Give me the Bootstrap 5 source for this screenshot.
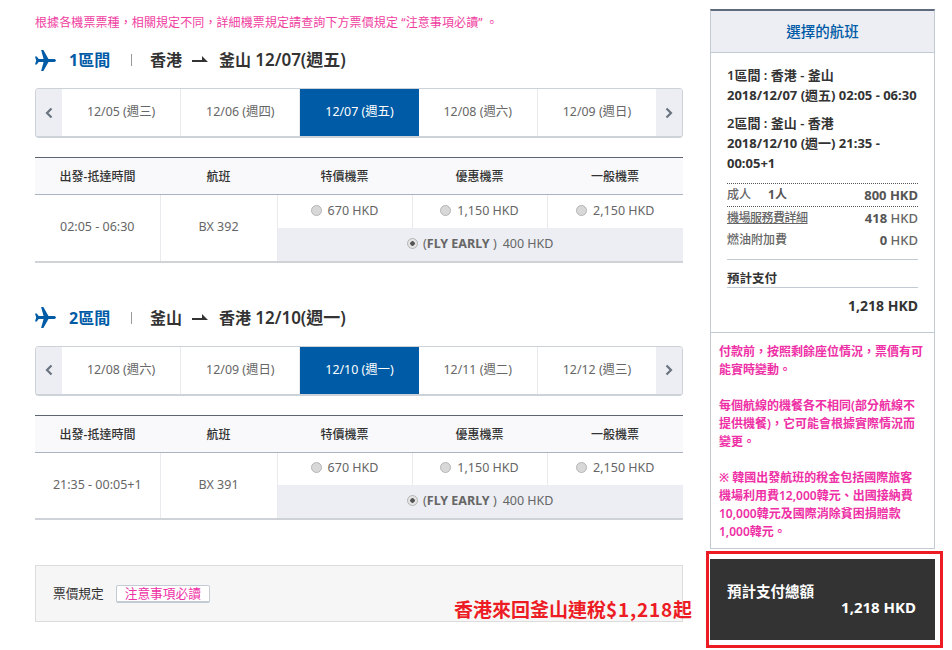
<!DOCTYPE html>
<html lang="zh-Hant">
<head>
<meta charset="utf-8">
<title>選擇的航班</title>
<link href="https://cdn.jsdelivr.net/npm/bootstrap@5.3.0/dist/css/bootstrap.min.css" rel="stylesheet">
<style>
html,body{width:952px;height:650px;overflow:hidden}
body{font-family:"Noto Sans","Noto Sans CJK TC",sans-serif;font-size:12px;color:#666;background:#fff;position:relative}
.page-wrap{padding:9px 0 0 35px;gap:27px}
.left-col{width:648px}
.right-col{width:225px}
.notice{color:#f0409f;font-size:12px;line-height:18px;height:18px;margin-top:5px;letter-spacing:.1px}
.sect-head{height:30px;margin-top:13px;font-size:16px;font-weight:700;color:#333;line-height:30px}
.plane{width:21px;height:21px;margin-right:13px}
.seg-no{color:#005ba6;width:62px}
.seg-bar{width:1px;height:12px;background:#999;margin-right:18px}
.route-arrow{width:16px;height:8px;margin:0 11px 0 10px}
.date-big{font-size:17px;font-weight:600}
.second{margin-top:40px}
.date-bar{height:50px;margin-top:13px;border:1px solid #cdd2d8;border-bottom-width:2px;border-radius:4px;overflow:hidden}
.date-nav{width:26px;background:#eceef3;color:#6a7480}
.date-cell{flex:1;font-size:12.4px;color:#666;border-right:1px solid #e8eaee}
.date-cell.on{background:#005ba6;color:#fff;border-right:0}
.date-cell.end{border-right:0}
.fare-table{width:648px;margin:19px 0 0;border-collapse:collapse;table-layout:fixed;font-size:12.5px}
.fare-table th,.fare-table td{padding:0;text-align:center;vertical-align:middle;border-color:#e8eaee;box-shadow:none}
.fare-table thead th{height:37px;padding-top:2px;background:#f9f9fb;color:#333;font-weight:500;font-size:12px;border-top:1px solid #5d6570;border-bottom:1px solid #aab4c0}
.fare-table td.b-r{border-right:1px solid #e8eaee}
.fare-table tbody tr.up td{height:33px;border-bottom:0}
.fare-table tbody tr.low td{height:34px;border-bottom:2px solid #cfd2d6}
.fare-table td.early{background:#eceef3}
.fare-table tbody tr.up td.span-cell{border-bottom:2px solid #cfd2d6}
.radio-dot{display:inline-block;width:11px;height:11px;border-radius:50%;background:#d8d8d8;border:1px solid #b5b5b5;margin-right:6px;vertical-align:-1px}
.radio-dot.sel{background:radial-gradient(circle,#555 0 2px,#e4e4e4 2.5px);margin-right:5px}
.early-name{font-weight:700}
.early-gap{margin-left:6px}
.rule-box{height:57px;margin-top:45px;background:#f6f6f6;border:1px solid #ddd;padding:0 17px;color:#333;gap:12px;font-size:12.7px}
.rule-btn{background:#fff;border:1px solid #c3cbd4;border-bottom-width:2px;border-radius:2px;color:#ee2fa5;height:18px;line-height:15px;padding:0 8px;font-size:12.7px}
.summary{border:1px solid #c2cad3;border-top:2px solid #5d6b7c;height:540px}
.summary-head{height:42px;background:#eceef3;border-bottom:1px solid #c2cad3;color:#005ba6;font-size:14.5px;font-weight:500}
.summary-body{padding:12px 16px 0;height:280px;border-bottom:1px solid #c2cad3;color:#333;line-height:20px;font-weight:500}
.trip{margin-bottom:8px;font-size:13px;font-weight:600}
.trip b{font-weight:700}
.price-row{font-size:12px;color:#666;line-height:22px;height:22px}
.dotted-top{border-top:1px dotted #555;margin-top:10px;height:23px}
.dotted-top.next{margin-top:0}
.price-row b{font-weight:700;color:#555}
.num-big{font-size:13px}
.adult-qty{margin-left:17px}
.svc-link{color:#666;text-decoration:underline;letter-spacing:-.5px}
.pay-label{border-top:1px solid #c2cad3;border-bottom:1px solid #c2cad3;margin-top:8px;height:29px;line-height:38px;color:#333;font-weight:600;font-size:12.5px;overflow:hidden}
.pay-val{text-align:right;font-weight:700;font-size:14px;margin-top:8px;color:#333}
.pink-note{padding:10px 8px 0;color:#ee2fa5;font-weight:600;font-size:12px;line-height:18px}
.pink-note p{margin:0 0 18px}
.note-end{padding-right:8px}
.total-frame{position:absolute;left:706px;top:551px;width:237px;height:97px;border:3px solid #ed1c24;padding:5px 1px;background:#fff}
.total-dark{height:81px;background:#333;color:#fff;padding:22px 19px 0 17px;font-weight:700;font-size:14.5px;line-height:20px;width:225px}
.total-dark .amt{text-align:right;font-size:15px;margin-top:-5px;line-height:22px}
.promo{position:absolute;left:454px;top:597px;color:#ed1c24;font-size:19px;font-weight:700;line-height:24px;white-space:nowrap;font-family:"Noto Sans CJK TC","Noto Sans",sans-serif}
.promo-num{letter-spacing:.8px}
</style>
</head>
<body>
<div class="d-flex page-wrap">
  <div class="left-col">
    <div class="notice">根據各機票票種，相關規定不同，詳細機票規定請查詢下方票價規定 “注意事項必讀” 。</div>

    <div class="d-flex align-items-center sect-head">
      <svg class="plane" viewBox="0 0 24 24"><path fill="#005ba6" d="M24 12c0-1-1.200-1.800-3-1.800h-5.600L9.600 0H7l2.800 10.200H4.200L2 7.400H0l1.400 4.600L0 16.600h2l2.200-2.800h5.600L7 24h2.600l5.800-10.200H21c1.800 0 3-.8 3-1.800z"/></svg>
      <span class="seg-no">1區間</span><span class="seg-bar"></span>
      <span>香港</span>
      <svg class="route-arrow" viewBox="0 0 16 8"><path fill="#333" d="M0 4h10V0l6 6H0z"/></svg>
      <span>釜山 <span class="date-big">12/07(週五)</span></span>
    </div>
    <div class="d-flex date-bar">
      <div class="date-nav d-flex align-items-center justify-content-center"><svg width="8" height="12" viewBox="0 0 8 12"><path fill="none" stroke="#6a7480" stroke-width="2.200" d="M6.500 1.500 2 6l4.500 4.500"/></svg></div>
      <div class="date-cell d-flex align-items-center justify-content-center">12/05 (週三)</div>
      <div class="date-cell d-flex align-items-center justify-content-center">12/06 (週四)</div>
      <div class="date-cell on d-flex align-items-center justify-content-center">12/07 (週五)</div>
      <div class="date-cell d-flex align-items-center justify-content-center">12/08 (週六)</div>
      <div class="date-cell end d-flex align-items-center justify-content-center">12/09 (週日)</div>
      <div class="date-nav d-flex align-items-center justify-content-center"><svg width="8" height="12" viewBox="0 0 8 12"><path fill="none" stroke="#6a7480" stroke-width="2.200" d="M1.500 1.500 6 6l-4.500 4.500"/></svg></div>
    </div>
    <table class="fare-table">
      <colgroup><col style="width:125px"><col style="width:117px"><col style="width:135px"><col style="width:135px"><col style="width:136px"></colgroup>
      <thead><tr><th>出發-抵達時間</th><th>航班</th><th>特價機票</th><th>優惠機票</th><th>一般機票</th></tr></thead>
      <tbody>
        <tr class="up"><td rowspan="2" class="b-r span-cell">02:05 - 06:30</td><td rowspan="2" class="b-r span-cell">BX 392</td><td class="b-r"><span class="radio-dot"></span>670 HKD</td><td class="b-r"><span class="radio-dot"></span>1,150 HKD</td><td><span class="radio-dot"></span>2,150 HKD</td></tr>
        <tr class="low"><td colspan="3" class="early"><span class="radio-dot sel"></span>(<span class="early-name">FLY EARLY</span> )<span class="early-gap">400 HKD</span></td></tr>
      </tbody>
    </table>

    <div class="d-flex align-items-center sect-head second">
      <svg class="plane" viewBox="0 0 24 24"><path fill="#005ba6" d="M24 12c0-1-1.200-1.800-3-1.800h-5.600L9.600 0H7l2.800 10.200H4.200L2 7.400H0l1.400 4.600L0 16.600h2l2.200-2.800h5.600L7 24h2.600l5.800-10.200H21c1.800 0 3-.8 3-1.800z"/></svg>
      <span class="seg-no">2區間</span><span class="seg-bar"></span>
      <span>釜山</span>
      <svg class="route-arrow" viewBox="0 0 16 8"><path fill="#333" d="M0 4h10V0l6 6H0z"/></svg>
      <span>香港 <span class="date-big">12/10(週一)</span></span>
    </div>
    <div class="d-flex date-bar">
      <div class="date-nav d-flex align-items-center justify-content-center"><svg width="8" height="12" viewBox="0 0 8 12"><path fill="none" stroke="#6a7480" stroke-width="2.200" d="M6.500 1.500 2 6l4.500 4.500"/></svg></div>
      <div class="date-cell d-flex align-items-center justify-content-center">12/08 (週六)</div>
      <div class="date-cell d-flex align-items-center justify-content-center">12/09 (週日)</div>
      <div class="date-cell on d-flex align-items-center justify-content-center">12/10 (週一)</div>
      <div class="date-cell d-flex align-items-center justify-content-center">12/11 (週二)</div>
      <div class="date-cell end d-flex align-items-center justify-content-center">12/12 (週三)</div>
      <div class="date-nav d-flex align-items-center justify-content-center"><svg width="8" height="12" viewBox="0 0 8 12"><path fill="none" stroke="#6a7480" stroke-width="2.200" d="M1.500 1.500 6 6l-4.500 4.500"/></svg></div>
    </div>
    <table class="fare-table">
      <colgroup><col style="width:125px"><col style="width:117px"><col style="width:135px"><col style="width:135px"><col style="width:136px"></colgroup>
      <thead><tr><th>出發-抵達時間</th><th>航班</th><th>特價機票</th><th>優惠機票</th><th>一般機票</th></tr></thead>
      <tbody>
        <tr class="up"><td rowspan="2" class="b-r span-cell">21:35 - 00:05+1</td><td rowspan="2" class="b-r span-cell">BX 391</td><td class="b-r"><span class="radio-dot"></span>670 HKD</td><td class="b-r"><span class="radio-dot"></span>1,150 HKD</td><td><span class="radio-dot"></span>2,150 HKD</td></tr>
        <tr class="low"><td colspan="3" class="early"><span class="radio-dot sel"></span>(<span class="early-name">FLY EARLY</span> )<span class="early-gap">400 HKD</span></td></tr>
      </tbody>
    </table>

    <div class="d-flex align-items-center rule-box"><span>票價規定</span><span class="rule-btn">注意事項必讀</span></div>
  </div>

  <div class="right-col">
    <div class="summary">
      <div class="summary-head d-flex align-items-center justify-content-center">選擇的航班</div>
      <div class="summary-body">
        <div class="trip">1區間 : 香港 - 釜山<br><b>2018/12/07 (週五) 02:05 - 06:30</b></div>
        <div class="trip mb-0">2區間 : 釜山 - 香港<br><b>2018/12/10 (週一) 21:35 - 00:05+1</b></div>
        <div class="price-row dotted-top d-flex justify-content-between"><span>成人<b class="adult-qty">1人</b></span><b class="num-big">800 HKD</b></div>
        <div class="price-row dotted-top next d-flex justify-content-between"><span class="svc-link">機場服務費詳細</span><span class="num-big"><b>418</b> HKD</span></div>
        <div class="price-row d-flex justify-content-between"><span>燃油附加費</span><span class="num-big"><b>0</b> HKD</span></div>
        <div class="pay-label">預計支付</div>
        <div class="pay-val">1,218 HKD</div>
      </div>
      <div class="pink-note">
        <p>付款前，按照剩餘座位情況，票價有可能實時變動。</p>
        <p class="note-end">每個航線的機餐各不相同(部分航線不提供機餐)，它可能會根據實際情況而變更。</p>
        <p class="mb-0 note-end">※ 韓國出發航班的稅金包括國際旅客機場利用費12,000韓元、出國接納費10,000韓元及國際消除貧困捐贈款1,000韓元。</p>
      </div>
    </div>
  </div>
</div>
<div class="total-frame"><div class="total-dark"><div>預計支付總額</div><div class="amt">1,218 HKD</div></div></div>
<div class="promo">香港來回釜山連稅<span class="promo-num">$1,218</span>起</div>
<script src="https://cdn.jsdelivr.net/npm/bootstrap@5.3.0/dist/js/bootstrap.bundle.min.js"></script>
</body>
</html>
